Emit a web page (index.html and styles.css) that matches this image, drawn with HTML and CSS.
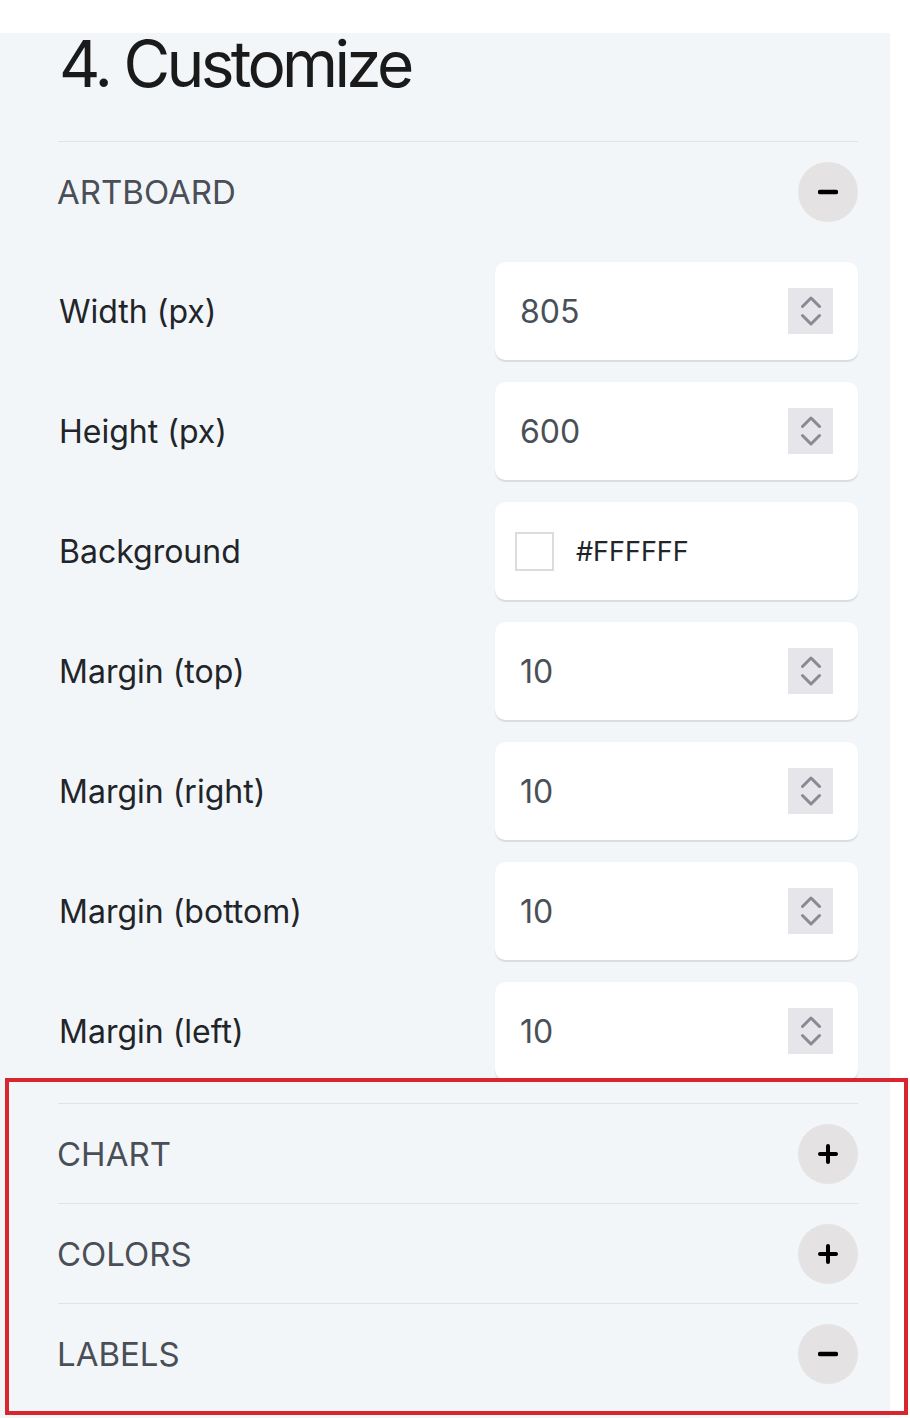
FILE: index.html
```html
<!DOCTYPE html>
<html>
<head>
<meta charset="utf-8">
<link rel="stylesheet" href="styles.css">
</head>
<body>
<div class="page">
  <section class="panel">
    <h2 class="title">4. Customize</h2>

    <div class="section">
      <div class="section-head">
        <span class="section-name">ARTBOARD</span>
        <span class="toggle"><svg width="20" height="20" viewBox="0 0 20 20"><path d="M2 10h16" stroke="#000" stroke-width="4.5" stroke-linecap="round"/></svg></span>
      </div>
      <div class="section-body">
        <div class="row">
          <span class="label">Width (px)</span>
          <div class="field"><span class="value">805</span><span class="spin"><svg width="20" height="32" viewBox="0 0 20 32"><path d="M1.5 11.5l8.5-8.5 8.5 8.5M1.5 20.5l8.5 8.5 8.5-8.5" fill="none" stroke="#8b8a94" stroke-width="3" stroke-linecap="round" stroke-linejoin="round"/></svg></span></div>
        </div>
        <div class="row">
          <span class="label">Height (px)</span>
          <div class="field"><span class="value">600</span><span class="spin"><svg width="20" height="32" viewBox="0 0 20 32"><path d="M1.5 11.5l8.5-8.5 8.5 8.5M1.5 20.5l8.5 8.5 8.5-8.5" fill="none" stroke="#8b8a94" stroke-width="3" stroke-linecap="round" stroke-linejoin="round"/></svg></span></div>
        </div>
        <div class="row">
          <span class="label">Background</span>
          <div class="field color-field"><span class="swatch"></span><span class="hex">#FFFFFF</span></div>
        </div>
        <div class="row">
          <span class="label">Margin (top)</span>
          <div class="field"><span class="value">10</span><span class="spin"><svg width="20" height="32" viewBox="0 0 20 32"><path d="M1.5 11.5l8.5-8.5 8.5 8.5M1.5 20.5l8.5 8.5 8.5-8.5" fill="none" stroke="#8b8a94" stroke-width="3" stroke-linecap="round" stroke-linejoin="round"/></svg></span></div>
        </div>
        <div class="row">
          <span class="label">Margin (right)</span>
          <div class="field"><span class="value">10</span><span class="spin"><svg width="20" height="32" viewBox="0 0 20 32"><path d="M1.5 11.5l8.5-8.5 8.5 8.5M1.5 20.5l8.5 8.5 8.5-8.5" fill="none" stroke="#8b8a94" stroke-width="3" stroke-linecap="round" stroke-linejoin="round"/></svg></span></div>
        </div>
        <div class="row">
          <span class="label">Margin (bottom)</span>
          <div class="field"><span class="value">10</span><span class="spin"><svg width="20" height="32" viewBox="0 0 20 32"><path d="M1.5 11.5l8.5-8.5 8.5 8.5M1.5 20.5l8.5 8.5 8.5-8.5" fill="none" stroke="#8b8a94" stroke-width="3" stroke-linecap="round" stroke-linejoin="round"/></svg></span></div>
        </div>
        <div class="row">
          <span class="label">Margin (left)</span>
          <div class="field"><span class="value">10</span><span class="spin"><svg width="20" height="32" viewBox="0 0 20 32"><path d="M1.5 11.5l8.5-8.5 8.5 8.5M1.5 20.5l8.5 8.5 8.5-8.5" fill="none" stroke="#8b8a94" stroke-width="3" stroke-linecap="round" stroke-linejoin="round"/></svg></span></div>
        </div>
      </div>
    </div>

    <div class="section">
      <div class="section-head">
        <span class="section-name">CHART</span>
        <span class="toggle"><svg width="20" height="20" viewBox="0 0 20 20"><path d="M2 10h16M10 2v16" stroke="#000" stroke-width="4" stroke-linecap="round"/></svg></span>
      </div>
    </div>

    <div class="section">
      <div class="section-head">
        <span class="section-name">COLORS</span>
        <span class="toggle"><svg width="20" height="20" viewBox="0 0 20 20"><path d="M2 10h16M10 2v16" stroke="#000" stroke-width="4" stroke-linecap="round"/></svg></span>
      </div>
    </div>

    <div class="section">
      <div class="section-head">
        <span class="section-name">LABELS</span>
        <span class="toggle"><svg width="20" height="20" viewBox="0 0 20 20"><path d="M2 10h16" stroke="#000" stroke-width="4.5" stroke-linecap="round"/></svg></span>
      </div>
    </div>
  </section>
  <div class="highlight"></div>
</div>
</body>
</html>
```

FILE: styles.css
```css
* { box-sizing: border-box; }
html, body { margin: 0; padding: 0; background: #ffffff; }
body { font-family: Inter, "Noto Sans", sans-serif; }

.page {
  position: relative;
  width: 910px;
  height: 1418px;
  overflow: hidden;
}

.panel {
  margin-top: 33px;
  width: 890px;
  min-height: 1385px;
  background: #f3f6f9;
  padding: 0 32px 0 58px;
}

.title {
  margin: 0 0 46px 0;
  padding-left: 1px;
  font-size: 64px;
  line-height: 62px;
  font-weight: 400;
  color: #1a1a1a;
  letter-spacing: -3.7px;
}

.section { border-top: 1px solid #e0e3e7; }

.section-head {
  height: 99px;
  display: flex;
  align-items: center;
  justify-content: space-between;
}

.section-name {
  font-size: 33px;
  color: #4a4f57;
  font-weight: 400;
  margin-left: -1px;
}

.toggle {
  width: 60px;
  height: 60px;
  border-radius: 50%;
  background: #e4e2e3;
  display: flex;
  align-items: center;
  justify-content: center;
}

.section-body {
  padding: 21px 0 23px 0;
  display: flex;
  flex-direction: column;
  gap: 22px;
}

.row {
  display: grid;
  grid-template-columns: 1fr 363px;
  align-items: center;
}

.label {
  font-size: 32px;
  color: #212529;
  padding-left: 1px;
}

.field {
  height: 98px;
  background: #ffffff;
  border-radius: 10px;
  box-shadow: 0 2px 1px rgba(0, 0, 0, 0.10), 0 0 1px rgba(0, 0, 0, 0.06);
  display: flex;
  align-items: center;
  justify-content: space-between;
  padding: 0 25px 0 25px;
}

.value {
  font-size: 32px;
  color: #495057;
}

.spin {
  width: 45px;
  height: 46px;
  background: #e6e5ea;
  display: flex;
  align-items: center;
  justify-content: center;
}

.color-field {
  justify-content: flex-start;
  padding-left: 20px;
  gap: 22px;
}

.swatch {
  width: 39px;
  height: 39px;
  border: 2px solid #dcdcdc;
  background: #ffffff;
}

.hex {
  font-size: 27px;
  color: #212529;
}

.highlight {
  position: absolute;
  left: 5px;
  top: 1078px;
  width: 903px;
  height: 337px;
  border: 4px solid #d9262e;
  pointer-events: none;
}
```
